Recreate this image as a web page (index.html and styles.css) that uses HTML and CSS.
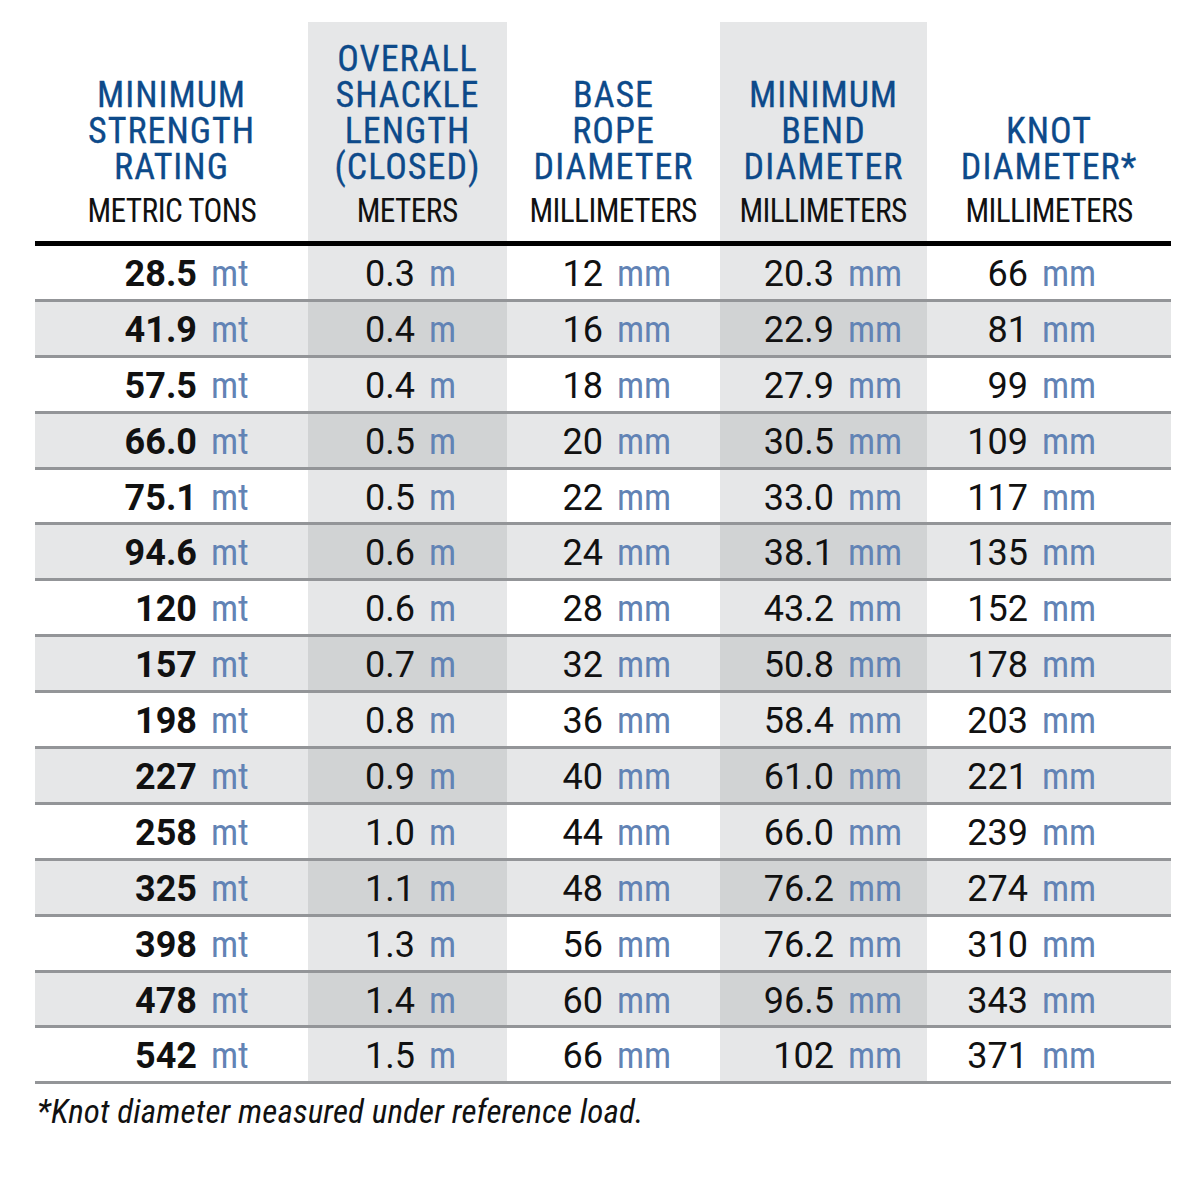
FILE: index.html
```html
<!DOCTYPE html>
<html>
<head>
<meta charset="utf-8">
<link rel="stylesheet" href="styles.css">
</head>
<body>
<div class="chart">
  <div class="row head">
    <div class="hc c1"><div class="title">MINIMUM<br>STRENGTH<br>RATING</div><div class="unitname">METRIC TONS</div></div>
    <div class="hc c2 sh"><div class="title">OVERALL<br>SHACKLE<br>LENGTH<br>(CLOSED)</div><div class="unitname">METERS</div></div>
    <div class="hc c3"><div class="title">BASE<br>ROPE<br>DIAMETER</div><div class="unitname">MILLIMETERS</div></div>
    <div class="hc c4 sh"><div class="title">MINIMUM<br>BEND<br>DIAMETER</div><div class="unitname">MILLIMETERS</div></div>
    <div class="hc c5"><div class="title">KNOT<br>DIAMETER*</div><div class="unitname">MILLIMETERS</div></div>
  </div>
  <div class="rule"></div>

  <div class="row"><div class="c c1"><b class="n">28.5</b><span class="u">mt</span></div><div class="c c2 sh"><span class="n">0.3</span><span class="u">m</span></div><div class="c c3"><span class="n">12</span><span class="u">mm</span></div><div class="c c4 sh"><span class="n">20.3</span><span class="u">mm</span></div><div class="c c5"><span class="n">66</span><span class="u">mm</span></div></div>
  <div class="row alt"><div class="c c1"><b class="n">41.9</b><span class="u">mt</span></div><div class="c c2 sh"><span class="n">0.4</span><span class="u">m</span></div><div class="c c3"><span class="n">16</span><span class="u">mm</span></div><div class="c c4 sh"><span class="n">22.9</span><span class="u">mm</span></div><div class="c c5"><span class="n">81</span><span class="u">mm</span></div></div>
  <div class="row"><div class="c c1"><b class="n">57.5</b><span class="u">mt</span></div><div class="c c2 sh"><span class="n">0.4</span><span class="u">m</span></div><div class="c c3"><span class="n">18</span><span class="u">mm</span></div><div class="c c4 sh"><span class="n">27.9</span><span class="u">mm</span></div><div class="c c5"><span class="n">99</span><span class="u">mm</span></div></div>
  <div class="row alt"><div class="c c1"><b class="n">66.0</b><span class="u">mt</span></div><div class="c c2 sh"><span class="n">0.5</span><span class="u">m</span></div><div class="c c3"><span class="n">20</span><span class="u">mm</span></div><div class="c c4 sh"><span class="n">30.5</span><span class="u">mm</span></div><div class="c c5"><span class="n">109</span><span class="u">mm</span></div></div>
  <div class="row"><div class="c c1"><b class="n">75.1</b><span class="u">mt</span></div><div class="c c2 sh"><span class="n">0.5</span><span class="u">m</span></div><div class="c c3"><span class="n">22</span><span class="u">mm</span></div><div class="c c4 sh"><span class="n">33.0</span><span class="u">mm</span></div><div class="c c5"><span class="n">117</span><span class="u">mm</span></div></div>
  <div class="row alt"><div class="c c1"><b class="n">94.6</b><span class="u">mt</span></div><div class="c c2 sh"><span class="n">0.6</span><span class="u">m</span></div><div class="c c3"><span class="n">24</span><span class="u">mm</span></div><div class="c c4 sh"><span class="n">38.1</span><span class="u">mm</span></div><div class="c c5"><span class="n">135</span><span class="u">mm</span></div></div>
  <div class="row"><div class="c c1"><b class="n">120</b><span class="u">mt</span></div><div class="c c2 sh"><span class="n">0.6</span><span class="u">m</span></div><div class="c c3"><span class="n">28</span><span class="u">mm</span></div><div class="c c4 sh"><span class="n">43.2</span><span class="u">mm</span></div><div class="c c5"><span class="n">152</span><span class="u">mm</span></div></div>
  <div class="row alt"><div class="c c1"><b class="n">157</b><span class="u">mt</span></div><div class="c c2 sh"><span class="n">0.7</span><span class="u">m</span></div><div class="c c3"><span class="n">32</span><span class="u">mm</span></div><div class="c c4 sh"><span class="n">50.8</span><span class="u">mm</span></div><div class="c c5"><span class="n">178</span><span class="u">mm</span></div></div>
  <div class="row"><div class="c c1"><b class="n">198</b><span class="u">mt</span></div><div class="c c2 sh"><span class="n">0.8</span><span class="u">m</span></div><div class="c c3"><span class="n">36</span><span class="u">mm</span></div><div class="c c4 sh"><span class="n">58.4</span><span class="u">mm</span></div><div class="c c5"><span class="n">203</span><span class="u">mm</span></div></div>
  <div class="row alt"><div class="c c1"><b class="n">227</b><span class="u">mt</span></div><div class="c c2 sh"><span class="n">0.9</span><span class="u">m</span></div><div class="c c3"><span class="n">40</span><span class="u">mm</span></div><div class="c c4 sh"><span class="n">61.0</span><span class="u">mm</span></div><div class="c c5"><span class="n">221</span><span class="u">mm</span></div></div>
  <div class="row"><div class="c c1"><b class="n">258</b><span class="u">mt</span></div><div class="c c2 sh"><span class="n">1.0</span><span class="u">m</span></div><div class="c c3"><span class="n">44</span><span class="u">mm</span></div><div class="c c4 sh"><span class="n">66.0</span><span class="u">mm</span></div><div class="c c5"><span class="n">239</span><span class="u">mm</span></div></div>
  <div class="row alt"><div class="c c1"><b class="n">325</b><span class="u">mt</span></div><div class="c c2 sh"><span class="n">1.1</span><span class="u">m</span></div><div class="c c3"><span class="n">48</span><span class="u">mm</span></div><div class="c c4 sh"><span class="n">76.2</span><span class="u">mm</span></div><div class="c c5"><span class="n">274</span><span class="u">mm</span></div></div>
  <div class="row"><div class="c c1"><b class="n">398</b><span class="u">mt</span></div><div class="c c2 sh"><span class="n">1.3</span><span class="u">m</span></div><div class="c c3"><span class="n">56</span><span class="u">mm</span></div><div class="c c4 sh"><span class="n">76.2</span><span class="u">mm</span></div><div class="c c5"><span class="n">310</span><span class="u">mm</span></div></div>
  <div class="row alt"><div class="c c1"><b class="n">478</b><span class="u">mt</span></div><div class="c c2 sh"><span class="n">1.4</span><span class="u">m</span></div><div class="c c3"><span class="n">60</span><span class="u">mm</span></div><div class="c c4 sh"><span class="n">96.5</span><span class="u">mm</span></div><div class="c c5"><span class="n">343</span><span class="u">mm</span></div></div>
  <div class="row"><div class="c c1"><b class="n">542</b><span class="u">mt</span></div><div class="c c2 sh"><span class="n">1.5</span><span class="u">m</span></div><div class="c c3"><span class="n">66</span><span class="u">mm</span></div><div class="c c4 sh"><span class="n">102</span><span class="u">mm</span></div><div class="c c5"><span class="n">371</span><span class="u">mm</span></div></div>

  <p class="note">*Knot diameter measured under reference load.</p>
</div>
</body>
</html>
```
FILE: styles.css
```css
html, body {
  margin: 0;
  padding: 0;
  background: #ffffff;
}

.chart {
  width: 1136px;
  margin: 22px 0 0 35px;
  font-family: "Roboto", "Liberation Sans", sans-serif;
  color: #111111;
}

.row {
  display: grid;
  grid-template-columns: 273px 199px 213px 207px 244px;
}

/* header */
.head .hc {
  height: 219px;
  display: flex;
  flex-direction: column;
  justify-content: flex-end;
  align-items: center;
  text-align: center;
  padding-bottom: 12px;
  box-sizing: border-box;
  font-family: "Roboto Condensed", "Roboto", sans-serif;
}

.head .sh { background: #e6e7e8; }

.title {
  color: #0d4a8a;
  font-size: 36px;
  line-height: 36px;
  letter-spacing: 1px;
  font-weight: 400;
  -webkit-text-stroke: 0.3px #0d4a8a;
}

.unitname {
  color: #111111;
  font-size: 33px;
  line-height: 36px;
  margin-top: 8px;
  letter-spacing: -0.6px;
  transform: scaleX(0.95);
}

.rule {
  height: 5px;
  background: #000000;
}

/* body rows */
.c {
  border-bottom: 3px solid #939598;
  display: grid;
  grid-template-columns: var(--n) auto;
  column-gap: 12px;
  align-items: center;
  font-size: 36px;
  line-height: 40px;
  padding-top: 3px;
  box-sizing: content-box;
  height: 49.9px;
}

.c .n {
  text-align: right;
  font-weight: 400;
}

.c1 .n { font-weight: 700; }

.c .u {
  font-family: "Roboto Condensed", "Roboto", sans-serif;
  font-weight: 400;
  color: #6283b5;
  text-align: left;
  padding-left: 2px;
}

.c1 { --n: 162px; }
.c2 { --n: 107px; }
.c3 { --n: 96px; }
.c4 { --n: 114px; }
.c5 { --n: 101px; }

.c.sh { background: #e6e7e8; }
.alt .c { background: #e6e7e8; }
.alt .c.sh { background: #d1d3d4; }

.note {
  margin: 8px 0 0 2px;
  font-family: "Roboto Condensed", "Roboto", sans-serif;
  font-style: italic;
  font-size: 33px;
  line-height: 40px;
  letter-spacing: 0.15px;
  color: #111111;
}
```
